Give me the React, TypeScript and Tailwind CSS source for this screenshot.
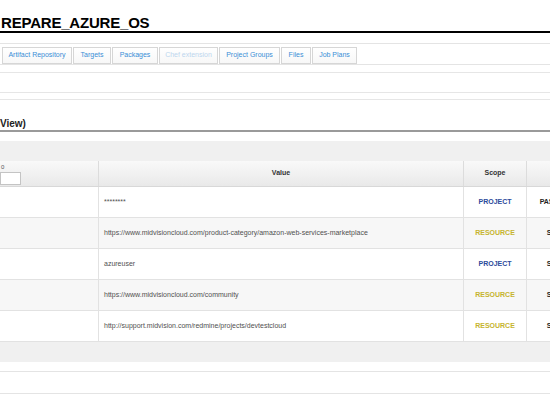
import React from "react";

const tabs = [
  { label: "Artifact Repository", w: "w-[70px]", disabled: false },
  { label: "Targets", w: "w-[38px]", disabled: false },
  { label: "Packages", w: "w-[46px]", disabled: false },
  { label: "Chef extension", w: "w-[59px]", disabled: true },
  { label: "Project Groups", w: "w-[61px]", disabled: false },
  { label: "Files", w: "w-[30px]", disabled: false },
  { label: "Job Plans", w: "w-[45px]", disabled: false },
];

const rows = [
  { value: "********", scope: "PROJECT", type: "PASSWORD" },
  { value: "https://www.midvisioncloud.com/product-category/amazon-web-services-marketplace", scope: "RESOURCE", type: "STRING" },
  { value: "azureuser", scope: "PROJECT", type: "STRING" },
  { value: "https://www.midvisioncloud.com/community", scope: "RESOURCE", type: "STRING" },
  { value: "http://support.midvision.com/redmine/projects/devtestcloud", scope: "RESOURCE", type: "STRING" },
];

export default function App() {
  return (
    <div className="w-[550px] h-[400px] overflow-hidden bg-white" style={{ fontFamily: '"Liberation Sans", Arial, sans-serif' }}>
      {/* Title */}
      <div className="h-[31px] flex items-end pl-[1px]">
        <span className="text-[15px] leading-[15px] font-bold text-black pb-[1px] tracking-[-0.2px]">REPARE_AZURE_OS</span>
      </div>
      <div className="h-[2px] bg-black" />
      <div className="h-[10px]" />
      {/* Tabs */}
      <div className="h-[22px] border-y border-[#e4e4e4] pt-[3px] pl-[2px] flex gap-[1px]">
        {tabs.map((t) => (
          <div
            key={t.label}
            className={`${t.w} h-[17px] border border-[#d6d6d6] bg-gradient-to-b from-white to-[#f7f7f7] flex items-center justify-center text-[7px] whitespace-nowrap ${t.disabled ? "text-[#bcd6ee]" : "text-[#3a8ed6]"}`}
          >
            {t.label}
          </div>
        ))}
      </div>
      <div className="h-[7px]" />
      <div className="h-[1px] bg-[#e6e6e6]" />
      <div className="h-[19px]" />
      <div className="h-[1px] bg-[#e6e6e6]" />
      <div className="h-[6px]" />
      <div className="h-[1px] bg-[#e6e6e6]" />
      {/* Section title */}
      <div className="h-[30px] flex items-end">
        <span className="text-[10px] leading-[10px] font-bold text-[#222] pb-[1px]">View)</span>
      </div>
      <div className="h-[2px] bg-[#9a9a9a]" />
      <div className="h-[9px]" />
      <div className="h-[20px] bg-[#f0f0f0]" />
      {/* Table */}
      <div className="w-[600px]">
        <div className="grid grid-cols-[99px_365px_63px_73px] h-[26px] bg-gradient-to-b from-[#f9f9f9] to-[#e9e9e9] border-b border-[#d8d8d8] text-[7px] font-bold text-[#333]">
          <div className="border-r border-[#dcdcdc] flex flex-col pt-[3px]">
            <span className="text-[6px] leading-[6px] font-normal text-[#555] pl-[1px]">0</span>
            <div className="mt-[2px] w-[21px] h-[13px] bg-white border border-[#c4c4c4]" />
          </div>
          <div className="border-r border-[#dcdcdc] flex items-center justify-center">Value</div>
          <div className="border-r border-[#dcdcdc] flex items-center justify-center">Scope</div>
          <div className="flex items-center justify-center" />
        </div>
        {rows.map((r, i) => (
          <div
            key={i}
            className={`grid grid-cols-[99px_365px_63px_73px] h-[31px] border-b border-[#e2e2e2] text-[7px] ${i % 2 === 1 ? "bg-[#f7f7f7]" : "bg-white"}`}
          >
            <div className="border-r border-[#e2e2e2]" />
            <div className="border-r border-[#e2e2e2] flex items-center pl-[5px] text-[#505050] whitespace-nowrap">{r.value}</div>
            <div className={`border-r border-[#e2e2e2] flex items-center justify-center font-bold ${r.scope === "PROJECT" ? "text-[#2d4b9b]" : "text-[#c6b42e]"}`}>
              {r.scope}
            </div>
            <div className="flex items-center justify-center font-bold text-[#222] whitespace-nowrap pr-[7px]">{r.type}</div>
          </div>
        ))}
      </div>
      <div className="h-[20px] bg-[#f0f0f0]" />
      <div className="h-[9px]" />
      <div className="h-[1px] bg-[#e4e4e4]" />
      <div className="h-[21px]" />
      <div className="h-[1px] bg-[#e4e4e4]" />
    </div>
  );
}
